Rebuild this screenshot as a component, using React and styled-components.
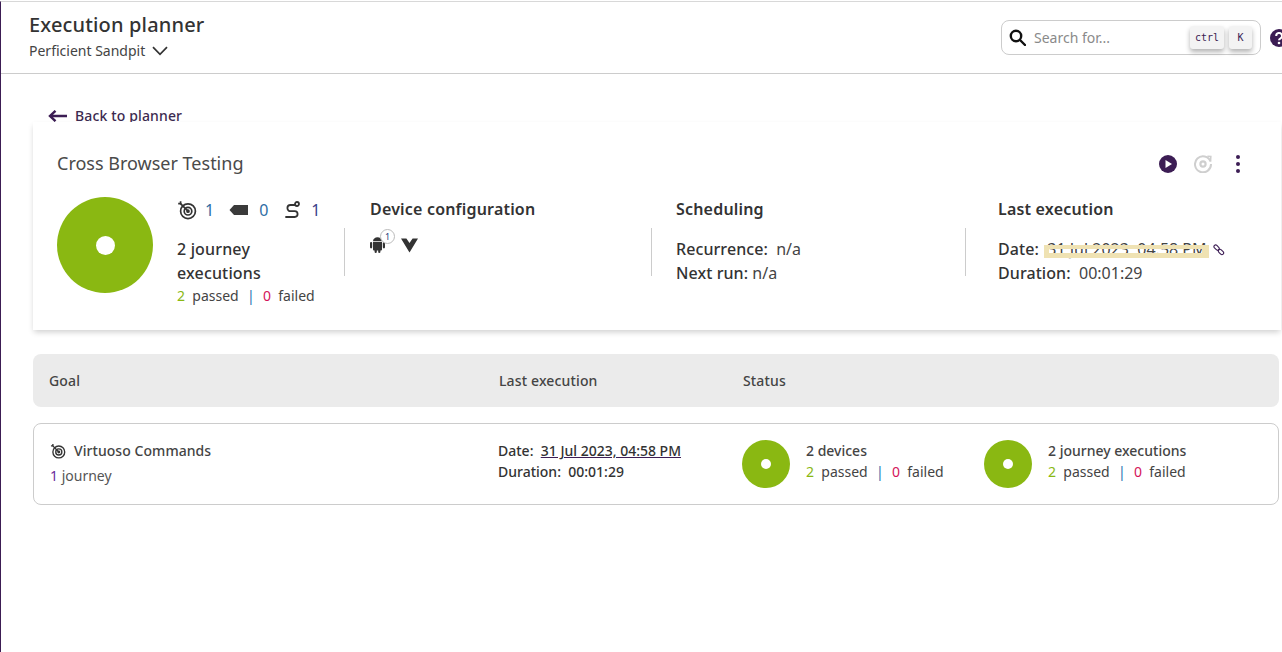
import React from "react";
import styled, { createGlobalStyle } from "styled-components";

const Global = createGlobalStyle`
  html, body { margin: 0; padding: 0; background: #fff; }
  body { font-family: "Noto Sans", "Open Sans", sans-serif; color: #333; overflow: hidden; }
  * { box-sizing: border-box; }
`;
const Page = styled.div`
  width: 1282px; height: 651px; margin-top: 1px; overflow: hidden; background: #fff;
  border-top: 1px solid #d8d8d8; border-left: 1px solid #3c1d54;
`;
const Header = styled.header`
  height: 72px; border-bottom: 1px solid #ccc; display: flex; align-items: flex-start; justify-content: space-between;
  padding: 9px 0 0 28px; overflow: hidden;
`;
const TitleBlock = styled.div`display: flex; flex-direction: column;`;
const Title = styled.h1`margin: 0; font-size: 20px; line-height: 28px; font-weight: 500; color: #333; letter-spacing: .008em;`;
const Org = styled.div`display: flex; align-items: center; gap: 7px; font-size: 14px; line-height: 20px; margin-top: 2px; color: #444;`;
const HeaderRight = styled.div`display: flex; align-items: center; gap: 9px; margin-top: 9px; margin-right: -6px;`;
const Search = styled.div`
  width: 260px; height: 35px; border: 1px solid #ccc; border-radius: 8px; display: flex; align-items: center; padding: 0 8px 0 7px;
`;
const SearchText = styled.span`margin-left: 8px; flex: 1; font-size: 14px; color: #8a8a8a;`;
const Key = styled.span`
  height: 23px; background: #f3f3f3; border-radius: 3px; font-family: "DejaVu Sans Mono", monospace; font-size: 10px; color: #3c1d54;
  display: inline-flex; align-items: center; justify-content: center; box-shadow: 0 3px 5px rgba(0,0,0,.3); margin-left: 5px; width: ${p => p.$w}px;
`;
const Main = styled.main`padding: 0 1px 0 32px;`;
const Back = styled.div`
  display: flex; align-items: center; gap: 8px; font-size: 14px; line-height: 20px; font-weight: 500; color: #3c2a50; height: 20px; margin: 32px 0 0 16px; letter-spacing: .01em;
`;
const Card = styled.section`
  width: 1248px; height: 208px; margin-top: -4px; background: #fff; box-shadow: 0 3px 6px -1px rgba(0,0,0,.2); padding: 0 0 0 24px; position: relative;
  display: flex; flex-direction: column;
`;
const CardTop = styled.div`display: flex; align-items: center; justify-content: space-between; height: 30px; margin-top: 27px; padding-right: 34px;`;
const CardTitle = styled.h2`margin: 0 0 2px; font-size: 18px; line-height: 26px; font-weight: 400; color: #4a4a4a;`;
const Actions = styled.div`display: flex; align-items: center; gap: 17px;`;
const CardBody = styled.div`display: flex; margin-top: 18px;`;
const Donut = styled.div`
  width: ${p => p.$size}px; height: ${p => p.$size}px; border-radius: 50%; flex: none; background: #8ab812;
  display: flex; align-items: center; justify-content: center;
  &::after { content: ""; width: ${p => p.$hole}px; height: ${p => p.$hole}px; border-radius: 50%; background: #fff; }
`;
const Summary = styled.div`width: 167px; margin-left: 24px; flex: none;`;
const Counts = styled.div`display: flex; align-items: center; height: 24px; margin-top: 1px; font-size: 16px; color: #2f6ea5;`;
const Count = styled.span`display: flex; align-items: center; gap: ${p => p.$gap}px; margin-right: ${p => p.$mr || 0}px; color: ${p => p.$c || "#2f6ea5"};`;
const BigLabel = styled.div`font-size: 16px; line-height: 24px; font-weight: 500; color: #333; width: 110px; margin: 15px 0 1px; letter-spacing: .01em;`;
const Stats = styled.div`font-size: 14px; line-height: 20px; color: #444; white-space: pre;`;
const Pass = styled.span`color: #8ab812;`;
const Fail = styled.span`color: #d4145a;`;
const Pipe = styled.span`color: #1f6fb0; margin: 0 1px;`;
const InfoCol = styled.div`width: ${p => p.$w}px; flex: none; padding-top: 2px;`;
const InfoHead = styled.h3`margin: 0; font-size: 16px; line-height: 20px; font-weight: 600; color: #333; letter-spacing: .012em;`;
const InfoBody = styled.div`margin-top: 9px; height: 48px;`;
const Rule = styled.div`width: 1px; height: 48px; background: #ccc; flex: none; margin: 31px ${p => p.$mr}px 0 0;`;
const InfoLines = styled.div`font-size: 16px; line-height: 24px; color: #333; white-space: pre; padding-top: 9px;`;
const Strong = styled.span`font-weight: 500; letter-spacing: .005em;`;
const Value = styled.span`color: #444;`;
const DateWrap = styled.span`position: relative; display: inline-block; font-size: 16px; color: #444;`;
const Redact = styled.span`
  position: absolute; left: -3px; width: 165px; top: 8px; height: 13px;
  border-style: solid; border-color: #efe2b3; border-width: 4px 7px 5px 5px;
`;
const DeviceRow = styled.div`display: flex; align-items: flex-start; padding-top: 8px; position: relative;`;
const Badge = styled.span`
  position: absolute; left: 10px; top: 1px; width: 15px; height: 15px; border-radius: 50%; border: 1px solid #bbb; background: #fff;
  font-size: 9px; line-height: 13px; text-align: center; color: #1f3a7a;
`;
const VSlot = styled.span`margin: 2px 0 0 16px; display: flex;`;
const LinkSlot = styled.span`margin-left: 2px;`;
const TableHead = styled.div`
  width: 1246px; height: 53px; margin-top: 24px; background: #ebebeb; border-radius: 8px; display: flex; align-items: center;
  font-size: 14px; font-weight: 500; color: #444; padding-left: 16px; letter-spacing: .01em;
`;
const Row = styled.div`
  width: 1246px; height: 82px; margin-top: 16px; border: 1px solid #ccc; border-radius: 8px; display: flex; align-items: center; padding-left: 16px;
`;
const GoalCol = styled.div`width: ${p => p.$w}px; flex: none; margin-bottom: ${p => p.$mb || 0}px;`;
const LastCol = styled.div`width: 244px; flex: none;`;
const GoalName = styled.div`display: flex; align-items: center; gap: 8px; font-size: 14px; line-height: 20px; font-weight: 500; color: #444; letter-spacing: .004em;`;
const GoalSub = styled.div`font-size: 14px; line-height: 20px; margin-top: 5px; color: #555;`;
const Purple = styled.span`color: #6a2a9a;`;
const RowDate = styled.div`font-size: 14px; line-height: 21px; font-weight: 500; color: #333; white-space: pre; margin-bottom: 6px;`;
const Link = styled.span`text-decoration: underline; text-decoration-color: #3c1d54;`;
const StatusBlock = styled.div`display: flex; align-items: center; gap: 16px; width: 242px; flex: none;`;
const StatusText = styled.div`font-size: 14px; line-height: 21px; margin-bottom: 6px;`;
const StatusTitle = styled.div`font-weight: 500; color: #444; margin-bottom: 1px;`;

const TargetIcon = ({ s = 20 }) => (
  <svg width={s} height={s} viewBox="0 0 20 20" fill="none" stroke="#333" strokeWidth="1.7">
    <circle cx="11" cy="11.2" r="7.4" />
    <circle cx="11" cy="11.2" r="3.8" />
    <circle cx="11" cy="11.2" r="1" fill="#333" />
    <path d="M11 11.2 3.5 3.6" />
    <path d="M1.2 3.6h2.4V1.2" />
  </svg>
);
const TagIcon = () => (
  <svg width="20" height="12" viewBox="0 0 20 12"><path d="M5 1h14v10H5L0.5 6z" fill="#3a3a3a" /></svg>
);
const RouteIcon = () => (
  <svg width="17" height="19" viewBox="0 0 17 19" fill="none" stroke="#333" strokeWidth="1.8" strokeLinecap="round">
    <circle cx="13" cy="3" r="2" />
    <path d="M10.8 4H6.5a3 3 0 0 0 0 6.2h4.2a2.8 2.8 0 0 1 0 5.8H2" />
  </svg>
);
const Chevron = () => (
  <svg width="16" height="10" viewBox="0 0 16 10" fill="none" stroke="#333" strokeWidth="1.7"><path d="M1 1.2 8 8.4l7-7.2" /></svg>
);
const BackArrow = () => (
  <svg width="19" height="12" viewBox="0 0 19 12" fill="none" stroke="#3c1d54" strokeWidth="2.4" style={{ marginLeft: -1 }}><path d="M19 6H2M7.5 .8 2 6l5.5 5.2" /></svg>
);
const Magnifier = () => (
  <svg width="17" height="17" viewBox="0 0 17 17" fill="none" stroke="#111" strokeWidth="2.4"><circle cx="7" cy="7" r="5.2" /><path d="m11 11 5 5" strokeLinecap="round" /></svg>
);
const Help = () => (
  <svg width="18" height="18" viewBox="0 0 18 18" style={{ flex: "none" }}>
    <circle cx="9" cy="9" r="9" fill="#3c1d54" />
    <path d="M6.2 7a2.9 2.9 0 1 1 4.4 2.4C9.6 10 9 10.5 9 11.3" fill="none" stroke="#fff" strokeWidth="2" />
    <circle cx="9" cy="14" r="1.3" fill="#fff" />
  </svg>
);
const Play = () => (
  <svg width="18" height="18" viewBox="0 0 18 18"><circle cx="9" cy="9" r="9" fill="#3c1d54" /><path d="M6.5 5 13 9l-6.5 4z" fill="#fff" /></svg>
);
const Replay = () => (
  <svg width="18" height="18" viewBox="0 0 18 18" fill="none" stroke="#cfcfcf" strokeWidth="2"><path d="M16.5 6.5A8 8 0 1 0 17 9" /><path d="M13.4 1.2l3.4 0.3-.3 5" strokeWidth="1.6" /><circle cx="9" cy="9" r="2.6" strokeWidth="2.2" /></svg>
);
const Dots = () => (
  <svg width="18" height="18" viewBox="0 0 18 18" fill="#3c1d54"><circle cx="9" cy="2" r="2" /><circle cx="9" cy="9" r="2" /><circle cx="9" cy="16" r="2" /></svg>
);
const Android = () => (
  <svg width="15" height="17" viewBox="0 0 15 17" fill="#333">
    <path d="M3 6h9v7.5a1 1 0 0 1-1 1H4a1 1 0 0 1-1-1z" />
    <path d="M3 5.2C3 3 5 1.3 7.5 1.3S12 3 12 5.2z" />
    <rect x="0" y="6" width="2.2" height="6.4" rx="1.1" />
    <rect x="12.8" y="6" width="2.2" height="6.4" rx="1.1" />
    <rect x="4.6" y="13" width="2.2" height="4" rx="1.1" />
    <rect x="8.2" y="13" width="2.2" height="4" rx="1.1" />
  </svg>
);
const VLogo = () => (
  <svg width="17" height="15" viewBox="0 0 17 15" fill="#333"><path d="M0 .5h5.4L8.5 5l3.1-4.5H17L8.5 14.5z" /></svg>
);
const LinkIcon = () => (
  <svg width="12" height="12" viewBox="0 0 12 12" fill="none" stroke="#3c1d54" strokeWidth="1.1" style={{ verticalAlign: "-1px" }}>
    <rect x="-3" y="-1.7" width="6" height="3.4" rx="1.7" transform="translate(3.6 3.6) rotate(45)" />
    <rect x="-3" y="-1.7" width="6" height="3.4" rx="1.7" transform="translate(8 8) rotate(45)" />
  </svg>
);
const Tally = () => (
  <Stats><Pass>2</Pass>{"  passed  "}<Pipe>|</Pipe>{"  "}<Fail>0</Fail>{"  failed"}</Stats>
);

export default function App() {
  return (
    <Page>
      <Global />
      <Header>
        <TitleBlock>
          <Title>Execution planner</Title>
          <Org>Perficient Sandpit <Chevron /></Org>
        </TitleBlock>
        <HeaderRight>
          <Search>
            <Magnifier />
            <SearchText>Search for...</SearchText>
            <Key $w={34}>ctrl</Key>
            <Key $w={23}>K</Key>
          </Search>
          <Help />
        </HeaderRight>
      </Header>
      <Main>
        <Back><BackArrow /> Back to planner</Back>
        <Card>
          <CardTop>
            <CardTitle>Cross Browser Testing</CardTitle>
            <Actions><Play /><Replay /><Dots /></Actions>
          </CardTop>
          <CardBody>
            <Donut $size={96} $hole={19} />
            <Summary>
              <Counts>
                <Count $gap={8} $mr={15}><TargetIcon />1</Count>
                <Count $gap={10} $mr={16}><TagIcon />0</Count>
                <Count $gap={10} $c="#3c3f8a"><RouteIcon />1</Count>
              </Counts>
              <BigLabel>2 journey executions</BigLabel>
              <Tally />
            </Summary>
            <Rule $mr={25} />
            <InfoCol $w={281}>
              <InfoHead>Device configuration</InfoHead>
              <InfoBody>
                <DeviceRow>
                  <Android />
                  <Badge>1</Badge>
                  <VSlot><VLogo /></VSlot>
                </DeviceRow>
              </InfoBody>
            </InfoCol>
            <Rule $mr={24} />
            <InfoCol $w={289}>
              <InfoHead>Scheduling</InfoHead>
              <InfoBody>
                <InfoLines>
                  <Strong>Recurrence:</Strong>{"  "}<Value>n/a</Value>{"\n"}
                  <Strong>Next run:</Strong>{" "}<Value>n/a</Value>
                </InfoLines>
              </InfoBody>
            </InfoCol>
            <Rule $mr={32} />
            <InfoCol $w={250}>
              <InfoHead>Last execution</InfoHead>
              <InfoBody>
                <InfoLines>
                  <Strong>Date:</Strong>{"  "}
                  <DateWrap>31 Jul 2023, 04:58 PM<Redact /></DateWrap>{" "}<LinkSlot><LinkIcon /></LinkSlot>{"\n"}
                  <Strong>Duration:</Strong>{"  "}<Value>00:01:29</Value>
                </InfoLines>
              </InfoBody>
            </InfoCol>
          </CardBody>
        </Card>
        <TableHead>
          <GoalCol $w={450}>Goal</GoalCol>
          <LastCol>Last execution</LastCol>
          <span>Status</span>
        </TableHead>
        <Row>
          <GoalCol $w={448} $mb={2}>
            <GoalName><TargetIcon s={16} />Virtuoso Commands</GoalName>
            <GoalSub><Purple>1</Purple> journey</GoalSub>
          </GoalCol>
          <LastCol>
            <RowDate>Date:{"  "}<Link>31 Jul 2023, 04:58 PM</Link>{"\n"}Duration:{"  "}00:01:29</RowDate>
          </LastCol>
          <StatusBlock>
            <Donut $size={48} $hole={10} />
            <StatusText><StatusTitle>2 devices</StatusTitle><Tally /></StatusText>
          </StatusBlock>
          <StatusBlock>
            <Donut $size={48} $hole={10} />
            <StatusText><StatusTitle>2 journey executions</StatusTitle><Tally /></StatusText>
          </StatusBlock>
        </Row>
      </Main>
    </Page>
  );
}
